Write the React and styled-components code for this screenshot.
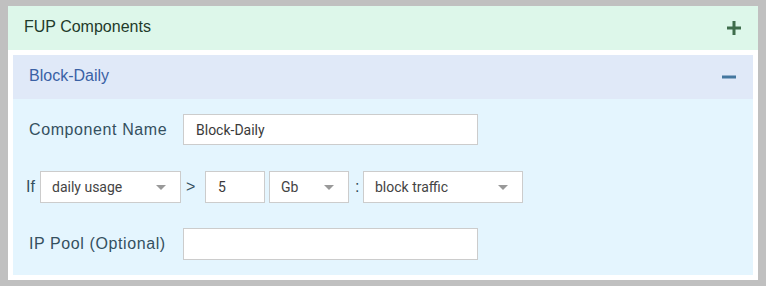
import React from 'react'
import styled, { createGlobalStyle } from 'styled-components'

const Global = createGlobalStyle`
  html, body {
    margin: 0;
    padding: 0;
    background: #c0c0c0;
  }
  body {
    font-family: 'Liberation Sans', Arial, sans-serif;
  }
`

const Page = styled.div`
  padding: 6px 8px 6px 8px;
`

const Panel = styled.section`
  width: 750px;
  background: #ffffff;
`

const PanelHeader = styled.div`
  height: 44px;
  display: flex;
  align-items: center;
  justify-content: space-between;
  padding: 0 17px 0 16px;
  box-sizing: border-box;
  background: ${(p) => p.$bg};
  color: ${(p) => p.$color};
  font-size: 16px;
`

const Title = styled.span`
  position: relative;
  top: -1px;
`

const Inner = styled.div`
  padding: 5px 5px 5px 5px;
`

const Body = styled.div`
  background: #e4f5fe;
  padding: 15px 0 15px 0;
  display: flex;
  flex-direction: column;
`

const Row = styled.div`
  display: flex;
  align-items: center;
  padding-left: ${(p) => p.$pl}px;
  margin-top: ${(p) => p.$mt || 0}px;
`

const Label = styled.label`
  width: 154px;
  color: #34505f;
  font-size: 16px;
  letter-spacing: 0.6px;
`

const IfLabel = styled.span`
  color: #34505f;
  font-size: 16px;
  width: 14px;
  padding-left: 1px;
`

const Sep = styled.span`
  color: #34505f;
  font-size: 16px;
  width: ${(p) => p.$w}px;
  margin-left: ${(p) => p.$ml}px;
`

const TextBox = styled.div`
  box-sizing: border-box;
  width: ${(p) => p.$w}px;
  height: ${(p) => p.$h || 32}px;
  margin-left: ${(p) => p.$ml || 0}px;
  background: #ffffff;
  border: 1px solid #cccccc;
  display: flex;
  align-items: center;
  padding-left: ${(p) => p.$pl || 12}px;
  font-family: Roboto, 'Liberation Sans', sans-serif;
  font-size: 14px;
  color: #3a3a3a;
`

const SelectBox = styled(TextBox)`
  justify-content: space-between;
  padding-right: 14px;
  color: #444444;
`

const Caret = styled.span`
  width: 0;
  height: 0;
  border-left: 5px solid transparent;
  border-right: 5px solid transparent;
  border-top: 5px solid #999999;
`

const Plus = () => (
  <svg width="14" height="14" viewBox="0 0 14 14">
    <rect x="0" y="5.5" width="14" height="3" fill="#3f6d4c" />
    <rect x="5.5" y="0" width="3" height="14" fill="#3f6d4c" />
  </svg>
)

const Minus = () => (
  <svg width="14" height="14" viewBox="0 0 14 14">
    <rect x="0" y="5.5" width="14" height="3" fill="#44779f" />
  </svg>
)

const Select = ({ value, ...rest }) => (
  <SelectBox {...rest}>
    <span>{value}</span>
    <Caret />
  </SelectBox>
)

export default function App() {
  return (
    <>
      <Global />
      <Page>
        <Panel>
          <PanelHeader $bg="#ddf7ea" $color="#1f3b2b">
            <Title>FUP Components</Title>
            <Plus />
          </PanelHeader>
          <Inner>
            <PanelHeader $bg="#e0e9f8" $color="#3a61a5">
              <Title>Block-Daily</Title>
              <Minus />
            </PanelHeader>
            <Body>
              <Row $pl={16}>
                <Label>Component Name</Label>
                <TextBox $w={295} $h={31}>Block-Daily</TextBox>
              </Row>
              <Row $pl={12} $mt={26}>
                <IfLabel>If</IfLabel>
                <Select $w={141} $pl={11} value="daily usage" />
                <Sep $ml={5} $w={14}>&gt;</Sep>
                <TextBox $w={60} $ml={5}>5</TextBox>
                <Select $w={80} $ml={4} $pl={11} value="Gb" />
                <Sep $ml={6} $w={8}>:</Sep>
                <Select $w={160} $pl={11} value="block traffic" />
              </Row>
              <Row $pl={16} $mt={25}>
                <Label>IP Pool (Optional)</Label>
                <TextBox $w={295} />
              </Row>
            </Body>
          </Inner>
        </Panel>
      </Page>
    </>
  )
}
